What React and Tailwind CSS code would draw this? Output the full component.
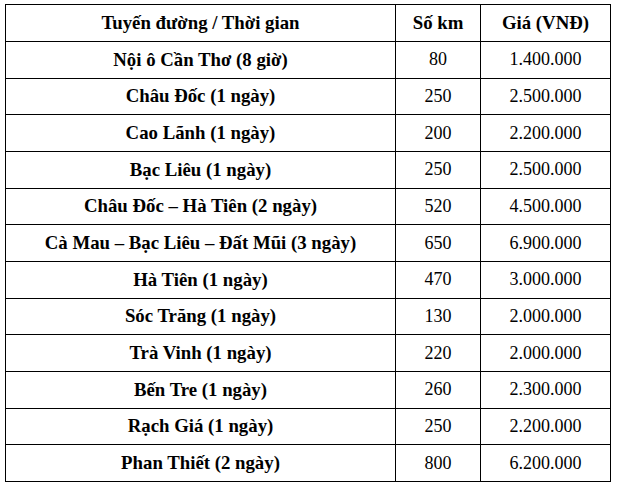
const rows = [
  ['Nội ô Cần Thơ (8 giờ)', '80', '1.400.000'],
  ['Châu Đốc (1 ngày)', '250', '2.500.000'],
  ['Cao Lãnh (1 ngày)', '200', '2.200.000'],
  ['Bạc Liêu (1 ngày)', '250', '2.500.000'],
  ['Châu Đốc – Hà Tiên (2 ngày)', '520', '4.500.000'],
  ['Cà Mau – Bạc Liêu – Đất Mũi (3 ngày)', '650', '6.900.000'],
  ['Hà Tiên (1 ngày)', '470', '3.000.000'],
  ['Sóc Trăng (1 ngày)', '130', '2.000.000'],
  ['Trà Vinh (1 ngày)', '220', '2.000.000'],
  ['Bến Tre (1 ngày)', '260', '2.300.000'],
  ['Rạch Giá (1 ngày)', '250', '2.200.000'],
  ['Phan Thiết (2 ngày)', '800', '6.200.000'],
]

const cell = "border border-black text-center font-['Liberation_Serif',serif] text-black"
const bold = `${cell} font-bold text-[18.8px]`
const plain = `${cell} font-normal text-[18px]`

export default function App() {
  return (
    <div className="w-[623px] h-[485px] bg-white pt-[4px] pl-[5px]">
      <table className="w-[605px] table-fixed border-collapse">
        <colgroup>
          <col className="w-[390px]" />
          <col className="w-[85px]" />
          <col className="w-[130px]" />
        </colgroup>
        <thead>
          <tr className="h-[37px]">
            <th className={bold}>Tuyến đường / Thời gian</th>
            <th className={bold}>Số km</th>
            <th className={bold}>Giá (VNĐ)</th>
          </tr>
        </thead>
        <tbody>
          {rows.map(([route, km, price]) => (
            <tr key={route} className="h-[36.67px]">
              <td className={bold}>{route}</td>
              <td className={plain}>{km}</td>
              <td className={plain}>{price}</td>
            </tr>
          ))}
        </tbody>
      </table>
    </div>
  )
}
